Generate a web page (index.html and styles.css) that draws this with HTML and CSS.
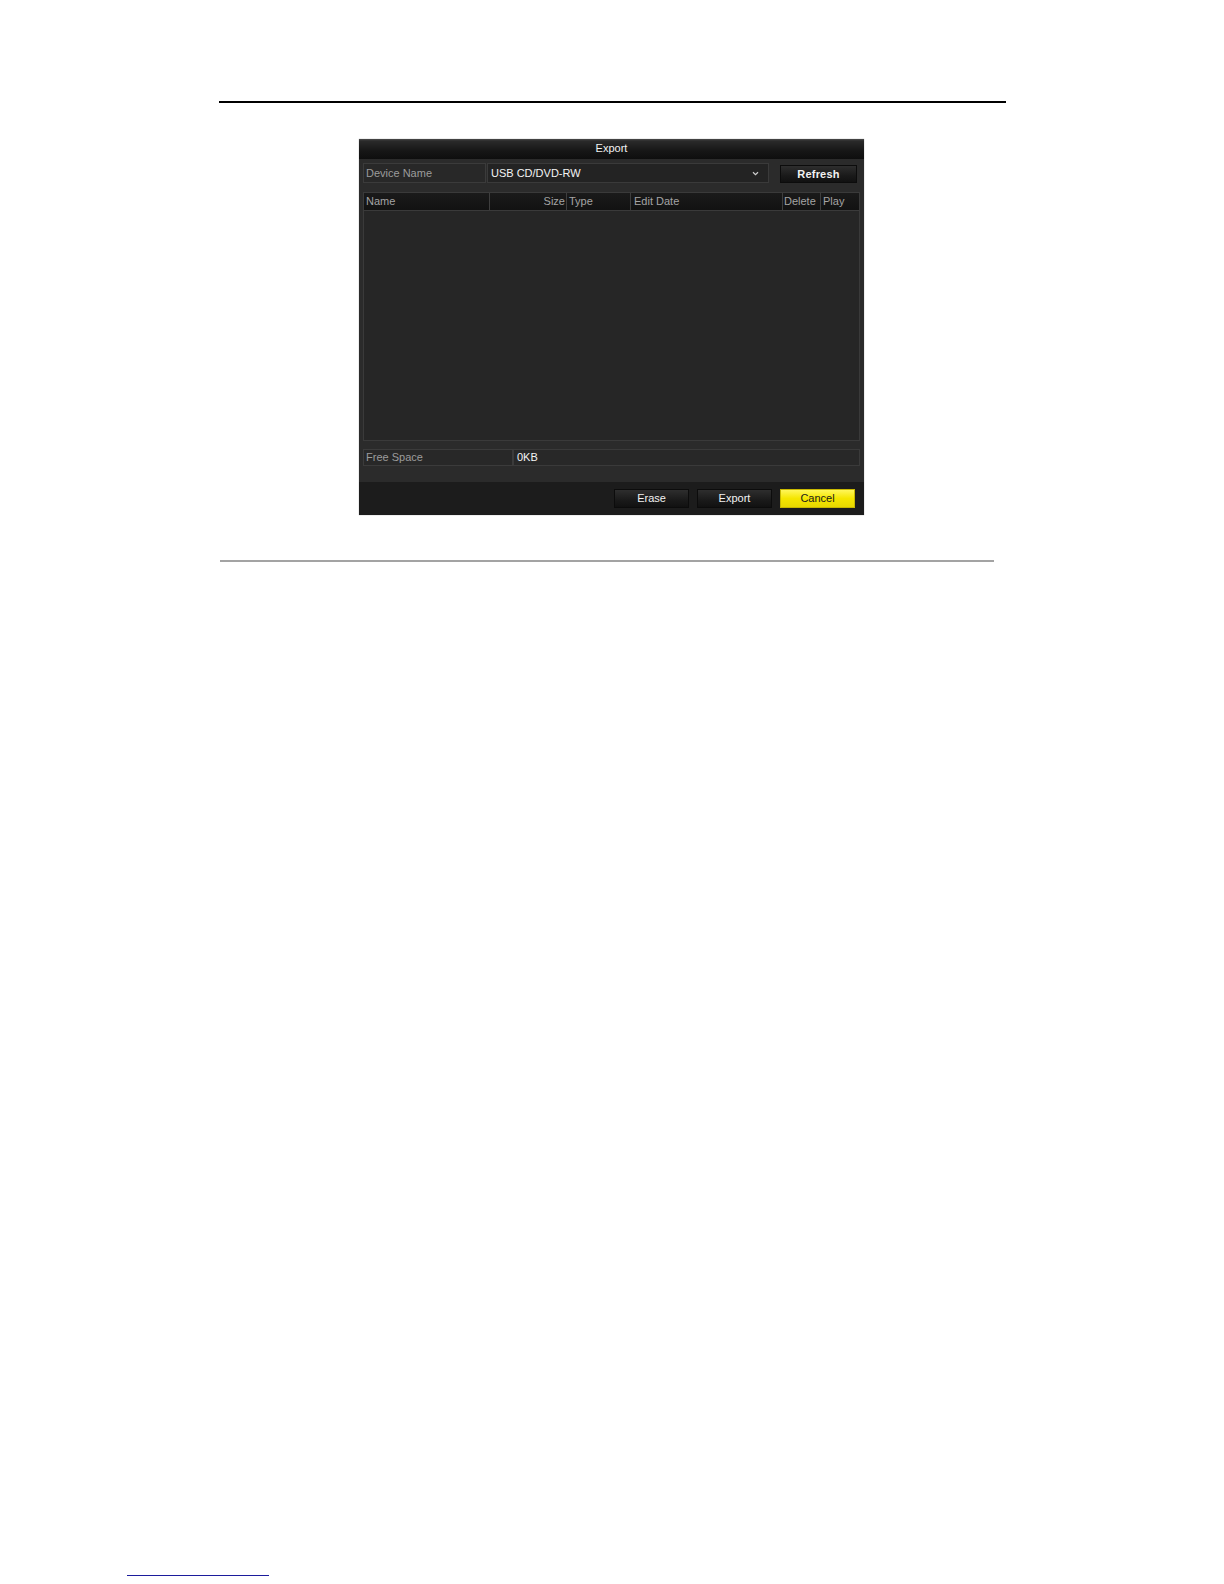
FILE: index.html
```html
<!DOCTYPE html>
<html>
<head>
<meta charset="utf-8">
<link rel="stylesheet" href="styles.css">
</head>
<body>
<div class="page">
  <div class="rule-top"></div>
  <div class="dialog">
    <div class="title">Export</div>
    <div class="panel">
      <div class="row-device">
        <div class="label-box">Device Name</div>
        <div class="select">
          <span class="select-value">USB CD/DVD-RW</span>
          <svg class="chev" width="7" height="5" viewBox="0 0 7 5"><path d="M1 1.2 L3.5 3.6 L6 1.2" fill="none" stroke="#cfcfcf" stroke-width="1.2"/></svg>
        </div>
        <div class="btn btn-refresh">Refresh</div>
      </div>
      <div class="list">
        <div class="list-head">
          <div class="col c-name">Name</div>
          <div class="col c-size">Size</div>
          <div class="col c-type">Type</div>
          <div class="col c-date">Edit Date</div>
          <div class="col c-del">Delete</div>
          <div class="col c-play">Play</div>
        </div>
        <div class="list-body"></div>
      </div>
      <div class="row-free">
        <div class="label-box free-label">Free Space</div>
        <div class="value-box">0KB</div>
      </div>
    </div>
    <div class="footer">
      <div class="btn">Erase</div>
      <div class="btn">Export</div>
      <div class="btn btn-cancel">Cancel</div>
    </div>
  </div>
  <div class="rule-bottom"></div>
  <div class="link-line"></div>
</div>
</body>
</html>
```

FILE: styles.css
```css
html, body {
  margin: 0;
  padding: 0;
  background: #ffffff;
}
body {
  font-family: "Liberation Sans", Arial, sans-serif;
  width: 1224px;
  height: 1584px;
  overflow: hidden;
}
.page {
  padding-top: 101px;
}
.rule-top {
  margin-left: 219px;
  width: 787px;
  height: 2px;
  background: #000;
}
.dialog {
  margin-left: 359px;
  margin-top: 36px;
  width: 505px;
  height: 376px;
  display: flex;
  flex-direction: column;
  background: #1c1c1c;
  box-shadow: 0 0 1px rgba(0,0,0,0.4);
}
.title {
  height: 20px;
  line-height: 19px;
  text-align: center;
  color: #f2f2f2;
  font-size: 11px;
  background: linear-gradient(#4a4a4a 0px, #2a2a2a 2px, #161616 12px, #0e0e0e 20px);
}
.panel {
  background: #2b2b2b;
  padding: 4px 4px 0 4px;
  height: 323px;
  box-sizing: border-box;
  display: flex;
  flex-direction: column;
}
.row-device {
  display: flex;
  height: 20px;
}
.label-box {
  width: 123px;
  box-sizing: border-box;
  border: 1px solid #3b3b3b;
  background: #282828;
  color: #9c9c9c;
  font-size: 11px;
  line-height: 18px;
  padding-left: 2px;
}
.select {
  width: 282px;
  box-sizing: border-box;
  border: 1px solid #3a3a3a;
  background: #232323;
  display: flex;
  align-items: center;
  justify-content: space-between;
  padding: 0 9px 0 3px;
  margin-left: 1px;
}
.select-value {
  color: #f4f4f4;
  font-size: 11px;
}
.chev {
  display: block;
}
.btn {
  width: 75px;
  height: 19px;
  box-sizing: border-box;
  border: 1px solid #0c0c0c;
  background: linear-gradient(#2e2e2e, #1a1a1a 60%, #111);
  color: #f2f2f2;
  font-size: 11px;
  line-height: 17px;
  text-align: center;
}
.btn-refresh {
  margin-left: 11px;
  width: 77px;
  height: 18px;
  margin-top: 2px;
  font-weight: bold;
  letter-spacing: 0.2px;
}
.list {
  margin-top: 9px;
  width: 497px;
  height: 249px;
  box-sizing: border-box;
  border: 1px solid #3a3a3a;
  background: #262626;
  display: flex;
  flex-direction: column;
}
.list-head {
  display: flex;
  height: 17px;
  background: linear-gradient(#1a1a1a, #121212);
  border-bottom: 1px solid #3a3a3a;
}
.col {
  box-sizing: border-box;
  border-right: 1px solid #3e3e3e;
  color: #a4a4a4;
  font-size: 11px;
  line-height: 16px;
  padding-left: 2px;
  white-space: nowrap;
  overflow: hidden;
}
.c-name { width: 126px; }
.c-size { width: 77px; text-align: right; padding-right: 1px; }
.c-type { width: 64px; }
.c-date { width: 152px; padding-left: 3px; }
.c-del { width: 38px; padding-left: 1px; }
.c-play { width: 38px; border-right: 0; }
.list-body {
  flex: 1;
}
.row-free {
  margin-top: 8px;
  display: flex;
  height: 17px;
  width: 497px;
}
.free-label {
  width: 150px;
  line-height: 15px;
}
.value-box {
  flex: 1;
  box-sizing: border-box;
  border: 1px solid #3a3a3a;
  background: #282828;
  color: #f4f4f4;
  font-size: 11px;
  line-height: 15px;
  padding-left: 3px;
}
.footer {
  flex: 1;
  background: #1c1c1c;
  display: flex;
  justify-content: flex-end;
  align-items: flex-start;
  padding: 7px 9px 0 0;
  gap: 8px;
}
.btn-cancel {
  background: linear-gradient(#fff65a, #f5e600 50%, #e8d800);
  border-color: #c8b800;
  color: #1a1a1a;
}
.rule-bottom {
  margin-top: 45px;
  margin-left: 220px;
  width: 774px;
  height: 2px;
  background: #a3a3a3;
}
.link-line {
  margin-top: 1013px;
  margin-left: 127px;
  width: 142px;
  height: 1px;
  background: #1c1c9c;
}
```
